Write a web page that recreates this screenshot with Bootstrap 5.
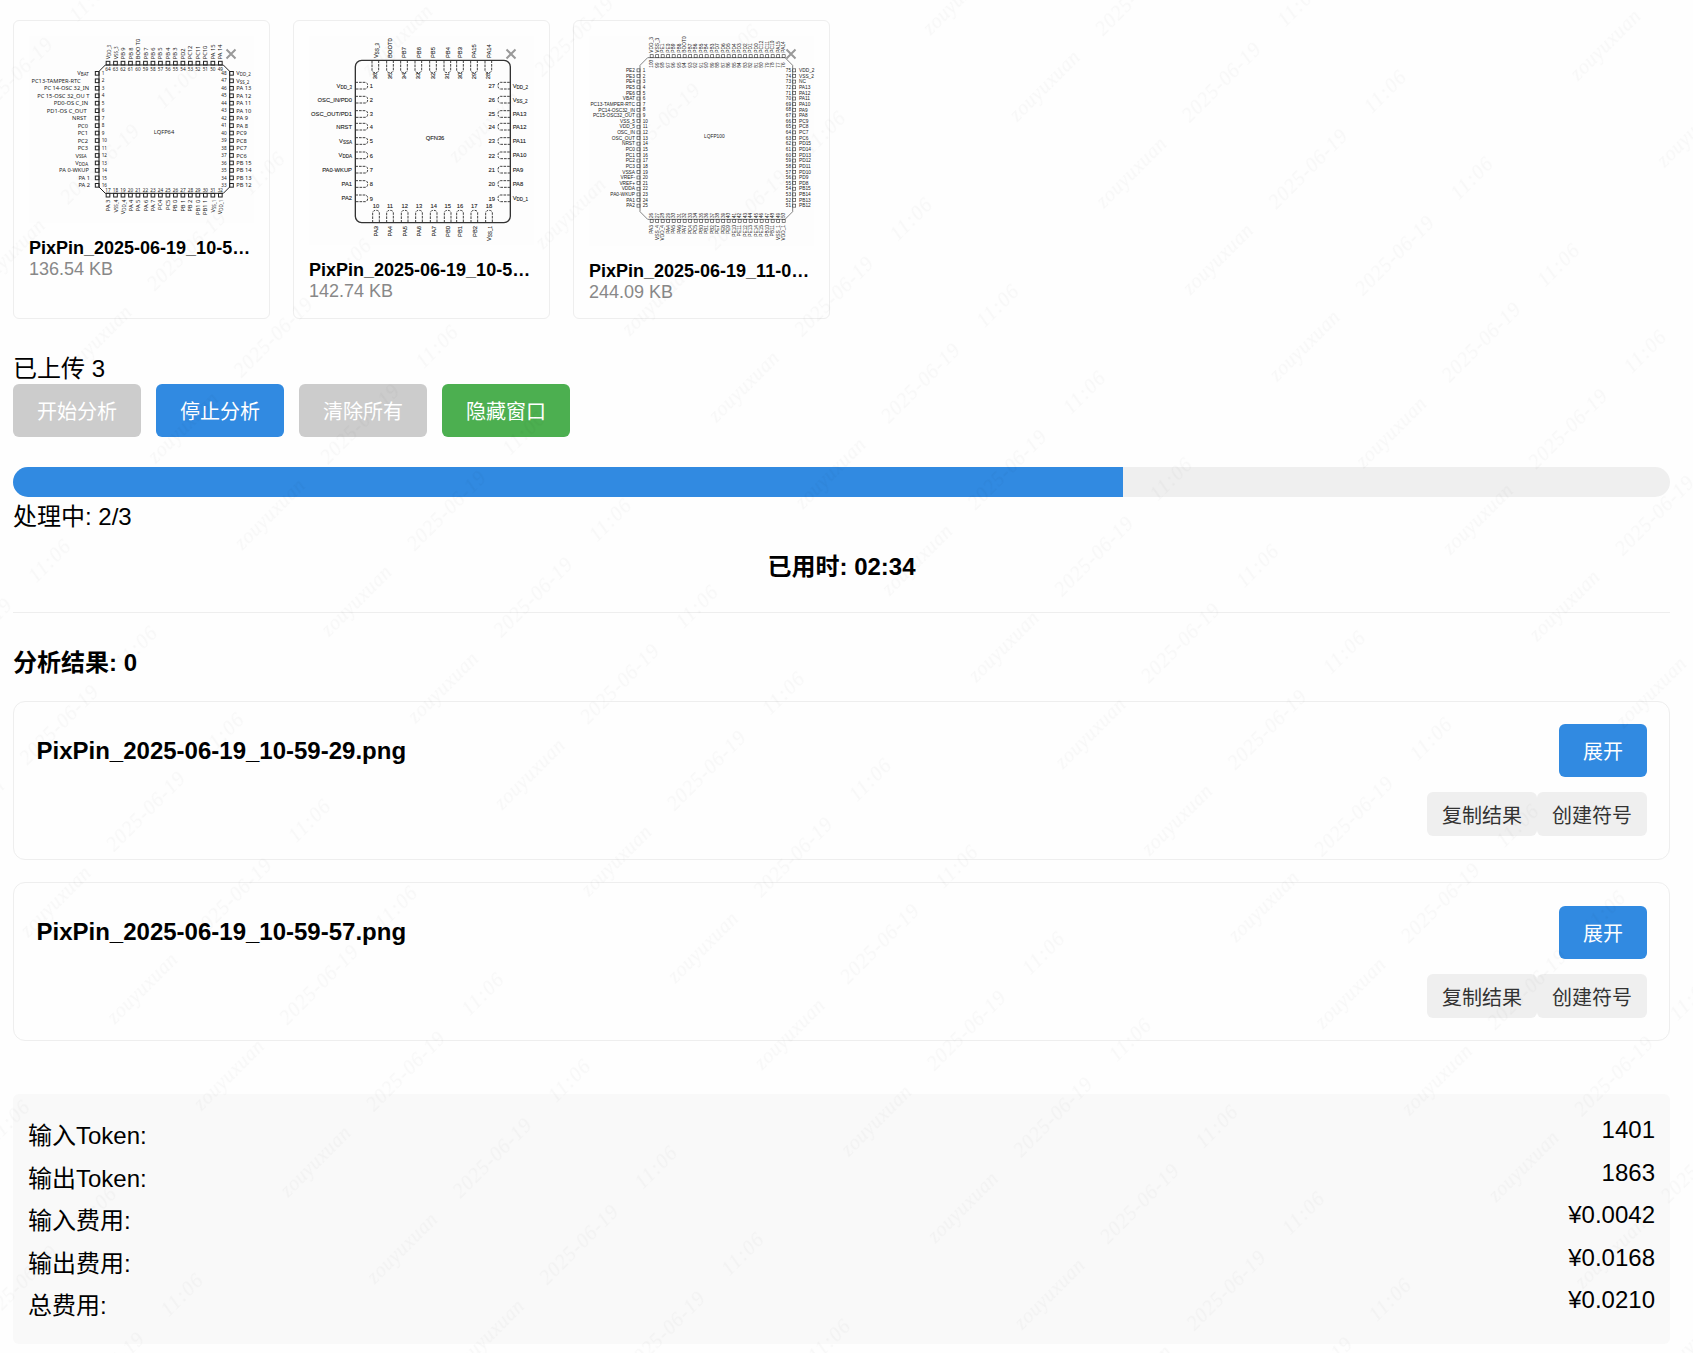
<!DOCTYPE html>
<html lang="zh-CN">
<head>
<meta charset="utf-8">
<meta name="viewport" content="width=device-width, initial-scale=1">
<title>引脚图分析</title>
<link href="https://cdn.jsdelivr.net/npm/bootstrap@5.3.0/dist/css/bootstrap.min.css" rel="stylesheet">
<style>
  body { font: 24px/28px "Liberation Sans", "Noto Sans CJK SC", sans-serif; color: #000; background: #fefefe; padding: 20px 23px 0 13px; overflow: hidden; }
  .file-list { gap: 23px; }
  .file-card { width: 257px; height: 299px; padding: 15px; border: 1px solid #eee; border-radius: 6px; background: none; }
  .file-card svg.chip { display: block; width: 225px; margin-bottom: 15px; background: #fdfdfd; overflow: visible; }
  .file-name, .file-size { font-size: 18px; line-height: 21px; white-space: nowrap; }
  .file-size { color: #888; line-height: 20px; }
  .file-remove { position: absolute; right: 32px; top: 27px; width: 12px; height: 12px; padding: 0; border: 0; background: none; display: flex; }
  .upload-count { margin-top: 36px; }
  .actions { margin-top: 1px; gap: 15px; }
  .btn-tool { --bs-btn-font-size: 20px; --bs-btn-line-height: 29px; --bs-btn-padding-x: 24px; --bs-btn-border-width: 0; --bs-btn-border-radius: 6px;
    --bs-btn-color: #fff; --bs-btn-bg: #318ae1; --bs-btn-disabled-color: #fff; --bs-btn-disabled-bg: #ccc; --bs-btn-disabled-opacity: 1; height: 53px; padding-top: 14px; padding-bottom: 10px; }
  .btn-hide { --bs-btn-bg: #4caf50; }
  .btn-plain { --bs-btn-font-size: 20px; --bs-btn-line-height: 28px; --bs-btn-padding-x: 15px; --bs-btn-border-width: 0; --bs-btn-border-radius: 6px; --bs-btn-color: #333; --bs-btn-bg: #efefef; height: 44px; padding-top: 10px; padding-bottom: 6px; }
  .progress { --bs-progress-height: 30px; --bs-progress-bg: #efefef; --bs-progress-border-radius: 15px; --bs-progress-bar-bg: #318ae1; margin-top: 30px; }
  .status { margin-top: 6px; }
  .elapsed { margin-top: 22px; }
  .divider { margin-top: 31px; height: 1px; background: #eee; }
  .result-head { margin-top: 36px; font-size: 24px; line-height: 28px; }
  .results { margin-top: 24px; gap: 22.4px; }
  .result-card { height: 159px; padding: 22px 22px 22px 22.5px; border: 1px solid #eee; border-radius: 12px; background: none; }
  .result-card h4 { font-size: 24px; line-height: 28px; margin: 13px 0 0; }
  .result-card + .result-card .result-side { padding-top: .6px; }
  .result-side { gap: 15px; }
  .usage { margin-top: 52.6px; height: 250px; padding: 22px 15px 0; border-radius: 6px; background: #f9f9f9; }
  .usage-row { height: 42.6px; }
  .usage-row span:first-child { padding-top: 6px; }
  .watermark { position: fixed; inset: 0; width: 100%; height: 100%; pointer-events: none; z-index: 10; }
  .watermark text { font: italic 20px "Liberation Serif", serif; fill: #000; fill-opacity: .026; text-anchor: middle; }
</style>
<script src="https://cdn.jsdelivr.net/npm/bootstrap@5.3.0/dist/js/bootstrap.bundle.min.js"></script>
</head>
<body>
<div class="d-flex file-list">
  <div class="card file-card">
    <svg class="chip" id="lqfp64" height="187" viewBox="87 108 675 561"></svg>
    <div class="file-name fw-bold">PixPin_2025-06-19_10-5…</div>
    <div class="file-size">136.54 KB</div>
    <button class="file-remove" aria-label="删除"><svg width="12" height="12" viewBox="0 0 12 12"><path d="M1.5 1.5l9 9M10.5 1.5l-9 9" stroke="#999" stroke-width="2"/></svg></button>
  </div>
  <div class="card file-card">
    <svg class="chip" id="qfn36" height="209" viewBox="87 108 675 627"></svg>
    <div class="file-name fw-bold">PixPin_2025-06-19_10-5…</div>
    <div class="file-size">142.74 KB</div>
    <button class="file-remove" aria-label="删除"><svg width="12" height="12" viewBox="0 0 12 12"><path d="M1.5 1.5l9 9M10.5 1.5l-9 9" stroke="#999" stroke-width="2"/></svg></button>
  </div>
  <div class="card file-card">
    <svg class="chip" id="lqfp100" height="210" viewBox="87 108 675 630"></svg>
    <div class="file-name fw-bold">PixPin_2025-06-19_11-0…</div>
    <div class="file-size">244.09 KB</div>
    <button class="file-remove" aria-label="删除"><svg width="12" height="12" viewBox="0 0 12 12"><path d="M1.5 1.5l9 9M10.5 1.5l-9 9" stroke="#999" stroke-width="2"/></svg></button>
  </div>
</div>

<div class="upload-count">已上传 3</div>
<div class="d-flex actions">
  <button class="btn btn-tool" disabled>开始分析</button>
  <button class="btn btn-tool">停止分析</button>
  <button class="btn btn-tool" disabled>清除所有</button>
  <button class="btn btn-tool btn-hide">隐藏窗口</button>
</div>

<div class="progress" role="progressbar" aria-valuenow="67" aria-valuemin="0" aria-valuemax="100"><div class="progress-bar" style="width:67%"></div></div>
<div class="status">处理中: 2/3</div>
<div class="elapsed text-center fw-bold">已用时: 02:34</div>
<div class="divider"></div>

<h3 class="result-head fw-bold mb-0">分析结果: 0</h3>
<div class="d-flex flex-column results">
  <div class="card result-card flex-row justify-content-between align-items-start">
    <h4 class="fw-bold">PixPin_2025-06-19_10-59-29.png</h4>
    <div class="d-flex flex-column align-items-end result-side">
      <button class="btn btn-tool">展开</button>
      <div class="d-flex"><button class="btn btn-plain">复制结果</button><button class="btn btn-plain">创建符号</button></div>
    </div>
  </div>
  <div class="card result-card flex-row justify-content-between align-items-start">
    <h4 class="fw-bold">PixPin_2025-06-19_10-59-57.png</h4>
    <div class="d-flex flex-column align-items-end result-side">
      <button class="btn btn-tool">展开</button>
      <div class="d-flex"><button class="btn btn-plain">复制结果</button><button class="btn btn-plain">创建符号</button></div>
    </div>
  </div>
</div>

<div class="usage">
  <div class="d-flex justify-content-between usage-row"><span>输入Token:</span><span>1401</span></div>
  <div class="d-flex justify-content-between usage-row"><span>输出Token:</span><span>1863</span></div>
  <div class="d-flex justify-content-between usage-row"><span>输入费用:</span><span>¥0.0042</span></div>
  <div class="d-flex justify-content-between usage-row"><span>输出费用:</span><span>¥0.0168</span></div>
  <div class="d-flex justify-content-between usage-row"><span>总费用:</span><span>¥0.0210</span></div>
</div>

<svg class="watermark" aria-hidden="true">
  <defs>
    <pattern id="wm" patternUnits="userSpaceOnUse" x="200" y="0" width="425.4" height="122.53" patternTransform="rotate(-45)">
      <text x="52.6" y="71" textLength="90">zouyuxuan</text>
      <text x="179.9" y="71" textLength="102">2025-06-19</text>
      <text x="289" y="71" textLength="50">11:06</text>
    </pattern>
  </defs>
  <rect width="100%" height="100%" fill="url(#wm)"/>
</svg>

<script>
const range = (a, b, p = '') => { const r = []; const s = a < b ? 1 : -1; for (let i = a; i !== b + s; i += s) r.push(p + i); return r; };
const txt = (s, x, y, size, anchor = 'start', rot = false) => {
  const m = s.match(/^V([A-Z]+(?:_\d)?)~$/);
  const body = m ? `V<tspan font-size="${size * .78}" dy="${size * .16}">${m[1]}</tspan>` : s;
  return `<text font-size="${size}" text-anchor="${anchor}" transform="translate(${x} ${y})${rot ? ' rotate(-90)' : ''}" >${body}</text>`;
};
// Quad flat package: octagonal body, square pads, label and pin number on each side
function quad(id, o) {
  let h = '';
  const { l, t, r, b, c, pad, f, nf, k } = o;
  h += `<path d="M${l + c} ${t}H${r - c}L${r} ${t + c}V${b - c}L${r - c} ${b}H${l + c}L${l} ${b - c}V${t + c}Z" fill="none" stroke="${o.ink}" stroke-width="${o.sw}"/>`;
  const box = (x, y) => `<rect x="${x}" y="${y}" width="${pad}" height="${pad}" fill="none" stroke="${o.ink}" stroke-width="${o.pw}"/>`;
  const n = o.left.length, at = (a, z, i) => a + (z - a) * i / (n - 1);
  for (let i = 0; i < n; i++) {
    const y = at(o.y0, o.y1, i), x = at(o.x0, o.x1, i), e = f * .36, g = nf * .36;
    h += box(l - pad, y - pad / 2) + txt(o.left[i], o.ends ? o.ends[i] : l - 15, y + e, f, 'end') + txt('' + (i + 1), l + 8, y + g, nf);
    h += box(r, y - pad / 2) + txt(o.right[i], r + o.rg, y + e, f) + txt('' + (3 * n - i), r - o.ng, y + g, nf, 'end');
    h += box(x - pad / 2, t - pad) + txt(o.top[i], x + e, t - pad - 6, f, 'start', true);
    h += box(x - pad / 2, b) + txt(o.bottom[i], x + e, b + pad + 8, f, 'end', true);
    const tn = '' + (4 * n - i), bn = '' + (n + 1 + i);
    h += k ? txt(tn, x + g, t + 30, nf, 'start', true) + txt(bn, x + g, b - 4, nf, 'start', true)
           : txt(tn, x, t + 17, nf, 'middle') + txt(bn, x, b - 4, nf, 'middle');
  }
  h += txt(o.name, o.nx, o.ny, f, 'middle');
  document.getElementById(id).innerHTML = `<g fill="${o.tc}" font-family="${o.font}">${h}</g>`;
}
quad('lqfp64', { l: 297, t: 195, r: 689, b: 580, c: 19, pad: 11, f: 17.2, nf: 14, ink: '#222', tc: '#222', sw: 3, pw: 3, font: 'Noto Sans', rg: 20, ng: 9,
  y0: 220, y1: 556, x0: 324, x1: 661, name: 'LQFP64', nx: 492, ny: 401,
  ends: [266, 242, 267, 268, 264, 260, 259, 264, 264, 264, 264, 260, 264, 267, 270, 270],
  left: ['VBAT~', 'PC13-TAMPER-RTC', 'PC 14-OSC 32_IN', 'PC 15-OSC 32_OU T', 'PD0-OS C_IN', 'PD1-OS C_OUT', 'NRST', 'PC0', 'PC1', 'PC2', 'PC3', 'VSSA~', 'VDDA~', 'PA 0-WKUP', 'PA 1', 'PA 2'],
  right: ['VDD_2~', 'VSS_2~', ...range(13, 8, 'PA '), ...range(9, 6, 'PC'), ...range(15, 12, 'PB ')],
  top: ['VDD_3~', 'VSS_3~', 'PB 9', 'PB 8', 'BOO T0', ...range(7, 3, 'PB '), 'PD2', 'PC12', 'PC11', 'PC10', 'PA 15', 'PA 14'],
  bottom: ['PA 3', 'VSS_4~', 'VDD_4~', ...range(4, 7, 'PA '), 'PC4', 'PC5', 'PB 0', 'PB 1', 'PB 2', 'PB1 0', 'PB1 1', 'VSS_1~', 'VDD_1~'] });
quad('lqfp100', { l: 240, t: 173, r: 698, b: 658, c: 23, pad: 9, f: 14.4, nf: 14, ink: '#444', tc: '#222', sw: 2, pw: 2, font: 'Liberation Sans', rg: 19, ng: 5, k: true,
  y0: 211, y1: 617, x0: 275, x1: 671, name: 'LQFP100', nx: 463, ny: 414,
  left: [...range(2, 6, 'PE'), 'VBAT', 'PC13-TAMPER-RTC', 'PC14-OSC32_IN', 'PC15-OSC32_OUT', 'VSS_5', 'VDD_5', 'OSC_IN', 'OSC_OUT', 'NRST', ...range(0, 3, 'PC'), 'VSSA', 'VREF-', 'VREF+', 'VDDA', 'PA0-WKUP', 'PA1', 'PA2'],
  right: ['VDD_2', 'VSS_2', 'NC', ...range(13, 8, 'PA'), ...range(9, 6, 'PC'), ...range(15, 8, 'PD'), ...range(15, 12, 'PB')],
  top: ['VDD_3', 'VSS_3', 'PE1', 'PE0', 'PB9', 'PB8', 'BOOT0', ...range(7, 3, 'PB'), ...range(7, 0, 'PD'), 'PC12', 'PC11', 'PC10', 'PA15', 'PA14'],
  bottom: ['PA3', 'VSS_4', 'VDD_4', ...range(4, 7, 'PA'), 'PC4', 'PC5', 'PB0', 'PB1', 'PB2', ...range(7, 15, 'PE'), 'PB10', 'PB11', 'VSS_1', 'VDD_1'] });

// QFN package: rounded body with dashed pads drawn inside the outline
(function () {
  const ys = [257, 299, 342, 380, 423, 466, 509, 552, 595];
  const tx = [286, 330, 372, 415, 459, 502, 540, 582, 625], bx = [288, 330, 374, 417, 461, 503, 540, 583, 627];
  const left = ['VDD_3~', 'OSC_IN/PD0', 'OSC_OUT/PD1', 'NRST', 'VSSA~', 'VDDA~', 'PA0-WKUP', 'PA1', 'PA2'];
  const right = ['VDD_2~', 'VSS_2~', 'PA13', 'PA12', 'PA11', 'PA10', 'PA9', 'PA8', 'VDD_1~'];
  const top = ['VSS_3~', 'BOOT0', 'PB7', 'PB6', 'PB5', 'PB4', 'PB3', 'PA15', 'PA14'];
  const bottom = ['PA3', 'PA4', 'PA5', 'PA6', 'PA7', 'PB0', 'PB1', 'PB2', 'VSS_1~'];
  let h = '<rect x="226" y="181" width="465" height="487" rx="19" fill="none" stroke="#333" stroke-width="4"/>';
  const pad = (x, y, a) => `<path transform="translate(${x} ${y}) rotate(${a})" d="M0 -10H30Q37 -9 37 0Q37 9 30 10H0" fill="none" stroke="#333" stroke-width="2.8" stroke-dasharray="8 3"/>`;
  for (let i = 0; i < 9; i++) {
    h += pad(226, ys[i], 0) + pad(691, ys[i], 180) + pad(tx[i], 181, 90) + pad(bx[i], 668, -90);
    h += txt(left[i], 216, ys[i] + 6, 17.4, 'end') + txt('' + (i + 1), 269, ys[i] + 7, 17);
    h += txt(right[i], 698, ys[i] + 6, 17.4) + txt('' + (27 - i), 645, ys[i] + 7, 17.4, 'end');
    h += txt(top[i], tx[i] + 7, 174, 17.4, 'start', true) + txt('' + (36 - i), tx[i] + 6, 238, 17.4, 'start', true);
    h += txt(bottom[i], bx[i] + 7, 678, 17.4, 'end', true) + txt('' + (10 + i), bx[i], 625, 17.4, 'middle');
  }
  h += txt('QFN36', 465, 420, 17.4, 'middle');
  document.getElementById('qfn36').innerHTML = `<g fill="#222" stroke="#222" stroke-width=".3" font-family="Liberation Sans">${h}</g>`;
})();
</script>
</body>
</html>
